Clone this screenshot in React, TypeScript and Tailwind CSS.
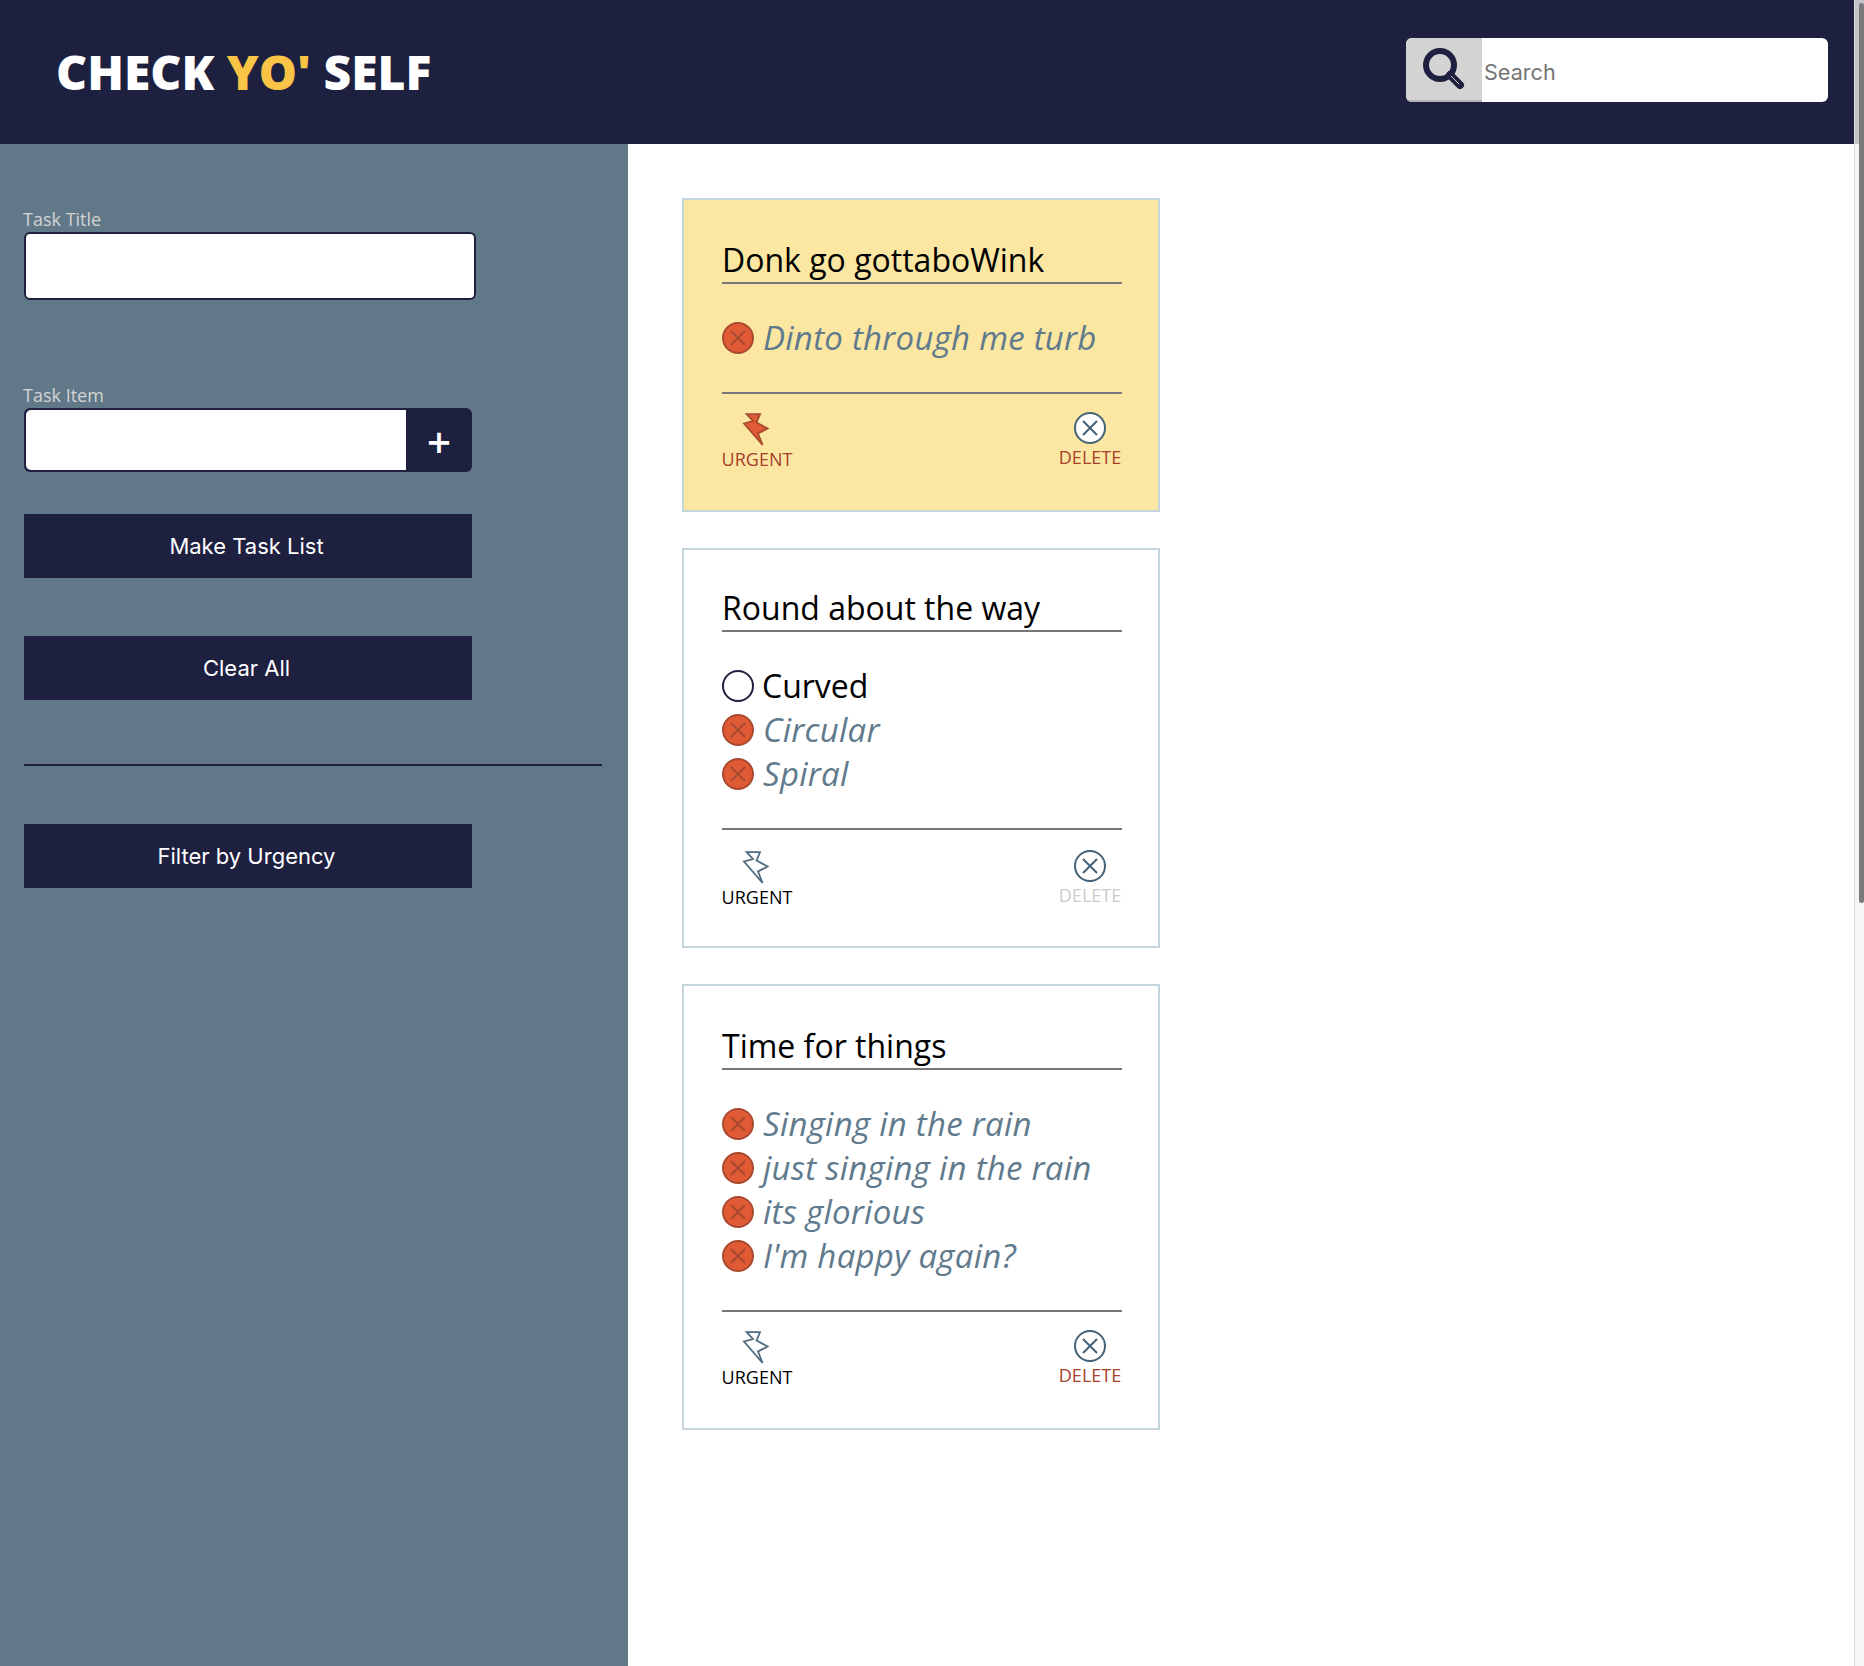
import React from 'react';

const openSans = "font-['Open_Sans',sans-serif]";
const inter = "font-['Inter',sans-serif]";

interface Task {
  title: string;
  items: { text: string; done: boolean }[];
  urgent: boolean;
  canDelete: boolean;
  top: string;
  foot: string;
}

const tasks: Task[] = [
  {
    title: 'Donk go gottaboWink',
    items: [{ text: 'Dinto through me turb', done: true }],
    urgent: true,
    canDelete: true,
    top: 'h-[84px]',
    foot: 'pt-[18px]',
  },
  {
    title: 'Round about the way',
    items: [
      { text: 'Curved', done: false },
      { text: 'Circular', done: true },
      { text: 'Spiral', done: true },
    ],
    urgent: false,
    canDelete: false,
    top: 'h-[82px]',
    foot: 'pt-[20px]',
  },
  {
    title: 'Time for things',
    items: [
      { text: 'Singing in the rain', done: true },
      { text: 'just singing in the rain', done: true },
      { text: 'its glorious', done: true },
      { text: "I'm happy again?", done: true },
    ],
    urgent: false,
    canDelete: true,
    top: 'h-[84px]',
    foot: 'pt-[18px]',
  },
];

function SearchIcon() {
  return (
    <svg width="44" height="44" viewBox="0 0 44 44" fill="none">
      <circle cx="18" cy="18" r="14" stroke="#1e2040" strokeWidth="6" />
      <path d="M28 28 L38 38" stroke="#1e2040" strokeWidth="8" strokeLinecap="round" />
      <path d="M29 29 L37 37" stroke="#d3d3d3" strokeWidth="1" />
    </svg>
  );
}

function BoltIcon({ urgent }: { urgent: boolean }) {
  return (
    <svg width="25" height="33" viewBox="0 0 25 33" className="ml-[-3px] mt-px overflow-visible">
      <path
        d="M3.6 1.2 L17 1.2 L13.6 9.5 L24.6 15.5 L15 20.5 L19.6 32 L1 10.5 L10 8 Z"
        fill={urgent ? '#e05a35' : 'none'}
        stroke={urgent ? '#a84a30' : '#4f6b7d'}
        strokeWidth="1.8"
      />
    </svg>
  );
}

function DeleteIcon() {
  return (
    <svg width="32" height="32" viewBox="0 0 32 32">
      <circle cx="16" cy="16" r="15" fill="#ffffff" stroke="#446378" strokeWidth="2" />
      <path d="M9 9 L23 23 M23 9 L9 23" stroke="#446378" strokeWidth="2" />
    </svg>
  );
}

function CheckIcon({ done }: { done: boolean }) {
  return (
    <svg width="32" height="32" viewBox="0 0 32 32" className="shrink-0">
      <circle
        cx="16"
        cy="16"
        r="15"
        fill={done ? '#e05a35' : '#ffffff'}
        stroke={done ? '#a84a30' : '#1e2040'}
        strokeWidth="2"
      />
      {done && <path d="M9 9 L23 23 M23 9 L9 23" stroke="#a84a30" strokeWidth="2" />}
    </svg>
  );
}

function TaskCard({ task }: { task: Task }) {
  return (
    <div
      className={`w-[478px] border-2 border-[#c5d5de] pl-[38px] pr-[36px] ${task.urgent ? 'bg-[#fbe6a2]' : 'bg-white'}`}
    >
      <div className={`${task.top} flex items-end border-b-2 border-[#777777]`}>
        <h2 className="text-[32px] leading-[44px] text-black">{task.title}</h2>
      </div>
      <ul className="my-[32px]">
        {task.items.map((item) => (
          <li key={item.text} className="flex h-[44px] items-center">
            <CheckIcon done={item.done} />
            <span
              className={
                item.done
                  ? 'ml-[9px] text-[33px] italic tracking-[0.25px] text-[#5f7a8c]'
                  : 'ml-[8px] text-[32px] text-black'
              }
            >
              {item.text}
            </span>
          </li>
        ))}
      </ul>
      <div className={`flex h-[118px] justify-between border-t-2 border-[#777777] ${task.foot}`}>
        <div className="flex w-[70px] flex-col items-center">
          <BoltIcon urgent={task.urgent} />
          <span
            className={`mt-px text-[18px] leading-[24px] ${task.urgent ? 'text-[#a6402b]' : 'text-black'}`}
          >
            URGENT
          </span>
        </div>
        <div className="mr-px flex w-[62px] flex-col items-center">
          <DeleteIcon />
          <span
            className={`mt-px text-[18px] leading-[24px] ${task.canDelete ? 'text-[#a6402b]' : 'text-[#cccccc]'}`}
          >
            DELETE
          </span>
        </div>
      </div>
    </div>
  );
}

function SideButton({ label, className }: { label: string; className: string }) {
  return (
    <button
      className={`${inter} flex h-[64px] w-[448px] items-center justify-center pr-[3px] text-[22px] text-white bg-[#1e2040] ${className}`}
    >
      {label}
    </button>
  );
}

export default function App() {
  return (
    <div className={`${openSans} flex h-[1666px] w-full overflow-hidden bg-white`}>
      <div className="flex min-w-0 flex-1 flex-col">
        <header className="flex h-[144px] items-center justify-between bg-[#1e2040] pl-[56px] pr-[26px]">
          <h1 className="text-[48px] font-extrabold leading-none text-white">
            CHECK <span className="text-[#fac546]">YO'</span> SELF
          </h1>
          <div className="mt-[-4px] flex h-[64px] w-[422px] overflow-hidden rounded-[6px] bg-white">
            <div className="flex w-[76px] items-center justify-center border-b-2 border-[#b5b5b5] bg-[#d3d3d3]">
              <SearchIcon />
            </div>
            <input
              placeholder="Search"
              className={`${inter} min-w-0 flex-1 pl-[2px] pt-[5px] text-[21.6px] outline-none placeholder:text-[#757575]`}
            />
          </div>
        </header>
        <div className="flex flex-1">
          <aside className="w-[628px] bg-[#617888] pl-[24px] pt-[63px]">
            <label className="ml-[-1px] block text-[18px] leading-[25px] text-[#d3d3d3]">
              Task Title
            </label>
            <input className="block h-[68px] w-[452px] rounded-[6px] border-2 border-[#1e2040] bg-white outline-none" />
            <label className="ml-[-1px] mt-[83px] block text-[18px] leading-[25px] text-[#d3d3d3]">
              Task Item
            </label>
            <div className="flex h-[64px] w-[448px] overflow-hidden rounded-[6px] bg-[#1e2040]">
              <input className="m-[2px] mr-0 min-w-0 flex-1 rounded-l-[5px] bg-white outline-none" />
              <button className="flex w-[66px] items-center justify-center pt-[3px] text-[42px] font-semibold leading-none text-white">
                +
              </button>
            </div>
            <SideButton label="Make Task List" className="mt-[42px]" />
            <SideButton label="Clear All" className="mt-[58px]" />
            <hr className="mt-[64px] w-[578px] border-t-2 border-[#1e2040]" />
            <SideButton label="Filter by Urgency" className="mt-[58px]" />
          </aside>
          <main className="flex flex-1 flex-col gap-[36px] pl-[54px] pt-[54px]">
            {tasks.map((task) => (
              <TaskCard key={task.title} task={task} />
            ))}
          </main>
        </div>
      </div>
      {/* window scrollbar */}
      <div className="w-[10px] border-l border-[#d8d8d8] bg-[linear-gradient(#c4c4c8_144px,#f6f6f6_144px)] pl-[4px]">
        <div className="mt-[3px] h-[900px] rounded-[3px] bg-[#7a7a7a]" />
      </div>
    </div>
  );
}
